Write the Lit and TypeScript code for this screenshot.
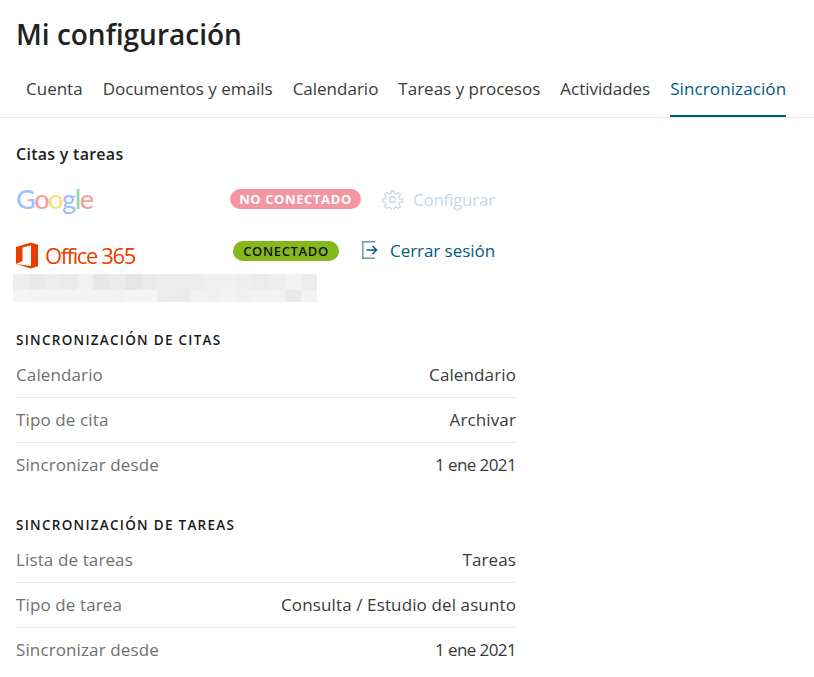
import { LitElement, html, css } from "lit";
import { customElement } from "lit/decorators.js";
import { classMap } from "lit/directives/class-map.js";

const MOSAIC = [
  ["#eeeeec","#e9e9e9","#eeedeb","#e8ebea","#f1f1f1","#e7e7e5","#ebebeb","#e5e5e5","#e9ebeb","#ececec","#ececec","#ededed","#f0f0f0","#f0f0f0","#eeeeee","#ebeded","#eeeeee","#f3f3f3","#ebeded"],
  ["#f5f5f3","#f4f4f4","#f3f3f3","#f3f3f3","#f3f3f3","#f2f2f2","#f2f2f2","#f4f4f4","#f4f4f4","#ececec","#ebebeb","#f1f1f1","#f0f0f0","#f2f2f2","#f2f0ee","#f0f3f2","#f2f2f2","#e8eaea","#f2f2f2"],
];

const tabs = ["Cuenta", "Documentos y emails", "Calendario", "Tareas y procesos", "Actividades", "Sincronización"];

const citas = [["Calendario", "Calendario"], ["Tipo de cita", "Archivar"], ["Sincronizar desde", "1 ene 2021"]];
const tareas = [["Lista de tareas", "Tareas"], ["Tipo de tarea", "Consulta / Estudio del asunto"], ["Sincronizar desde", "1 ene 2021"]];

@customElement("app-root")
export class AppRoot extends LitElement {
  static styles = css`
    :host { display: block; font-family: "Open Sans", "Noto Sans", sans-serif; color: #333; background: #fff; height: 677px; overflow: hidden; }
    h1 { margin: 0; padding: 17px 0 0 16px; font-size: 28px; line-height: 34px; font-weight: 600; color: #222; }
    .tabs { display: flex; gap: 20px; padding: 20px 10px 0 26px; height: 46px; border-bottom: 1px solid #e9e9e9; }
    .tab { font-size: 17px; line-height: 24px; height: 46px; box-sizing: border-box; padding-top: 6px; white-space: nowrap; color: #3a3a3a; }
    .tab.on { color: #005a82; border-bottom: 2px solid #005a82; letter-spacing: 0.1px; }
    .content { width: 500px; padding: 0 0 0 16px; }
    h2 { margin: 0; padding-top: 25px; font-size: 16px; line-height: 22px; font-weight: 600; color: #222; letter-spacing: 0.27px; }
    .svc { display: flex; align-items: center; }
    .g-row { height: 32px; margin-top: 18px; }
    .o-row { height: 30px; margin-top: 21px; }
    .logo { width: 214px; flex: none; white-space: nowrap; }
    .google { font-family: "Lato", sans-serif; font-size: 27px; letter-spacing: -1.4px; line-height: 32px; font-weight: 500; opacity: .5; }
    .g1 { color: #4285f4; } .g2 { color: #ea4335; } .g3 { color: #fbbc05; } .g4 { color: #34a853; }
    .office { display: flex; align-items: center; gap: 5px; padding-top: 8px; color: #eb3c00; font-size: 22px; letter-spacing: -1.4px; }
    .badge { display: inline-flex; align-items: center; justify-content: center; height: 20px; border-radius: 10px; font-size: 13px; font-weight: 700; letter-spacing: 0.6px; }
    .off { width: 131px; background: #f4969f; color: #fff; }
    .on-b { width: 106px; margin-left: 3px; background: #84b81c; color: #111; font-weight: 600; letter-spacing: 0.65px; }
    .act { display: flex; align-items: center; gap: 10px; font-size: 17px; letter-spacing: -0.05px; white-space: nowrap; }
    .cfg { margin-left: 21px; color: #c5d9e8; letter-spacing: -0.25px; }
    .out { margin-left: 22px; color: #005a82; gap: 11px; padding-bottom: 2px; }
    .mosaic { display: grid; grid-template-columns: repeat(19, 16px); grid-template-rows: 16px 12px; margin: 8px 0 0 -3px; width: 304px; }
    h3 { margin: 0; font-size: 13.5px; line-height: 18px; font-weight: 600; letter-spacing: 1.27px; color: #1a1a1a; }
    .sec1, .sec2 { margin-top: 29px; }
    .rows { margin-top: 4px; }
    .row { display: flex; justify-content: space-between; align-items: center; height: 42px; padding-bottom: 2px; border-bottom: 1px solid #e9e9e9; font-size: 17px; letter-spacing: 0.12px; }
    .row:last-child { border-bottom: 0; }
    .k { color: #707070; }
    .v { color: #3a3a3a; }
    .num { letter-spacing: -0.6px; }
  `;

  private rows(data: string[][]) {
    return data.map(([k, v]) => html`<div class="row"><span class="k">${k}</span><span class=${classMap({ v: true, num: /\d/.test(v) })}>${v}</span></div>`);
  }

  render() {
    return html`
      <h1>Mi configuración</h1>
      <div class="tabs">${tabs.map((t, i) => html`<div class=${classMap({ tab: true, on: i === 5 })}>${t}</div>`)}</div>
      <div class="content">
        <h2>Citas y tareas</h2>
        <div class="svc g-row">
          <div class="logo google"><span class="g1">G</span><span class="g2">o</span><span class="g3">o</span><span class="g1">g</span><span class="g4">l</span><span class="g2">e</span></div>
          <span class="badge off">NO CONECTADO</span>
          <span class="act cfg">
            <svg width="21" height="21" viewBox="0 0 24 24" fill="none" stroke="#c5d9e8" stroke-width="1.5" stroke-linejoin="round">
              <circle cx="12" cy="12" r="3.4"></circle>
              <path d="M10.3 2h3.4l.5 3 2 .85 2.5-1.75 2.4 2.4-1.75 2.5.85 2 3 .5v3.4l-3 .5-.85 2 1.75 2.5-2.4 2.4-2.5-1.75-2 .85-.5 3h-3.4l-.5-3-2-.85-2.5 1.75-2.4-2.4 1.75-2.5-.85-2-3-.5v-3.4l3-.5.85-2L3.2 6.5l2.4-2.4 2.5 1.75 2-.85z"></path>
            </svg>
            Configurar
          </span>
        </div>
        <div class="svc o-row">
          <div class="logo office">
            <svg width="24" height="27" viewBox="0 0 24 27"><path fill="#eb3c00" fill-rule="evenodd" d="M0 5 15 .5l7 2.200v21.600L15 26.500 0 22zM15 3.500 6.500 5.500v13.500L0 22l15 2z"></path></svg>
            <span>Office 365</span>
          </div>
          <span class="badge on-b">CONECTADO</span>
          <span class="act out">
            <svg width="18" height="18" viewBox="0 0 18 18" fill="none" stroke-width="1.5">
              <path stroke="#6f96ad" d="M14 .8H1.800v16.400H14"></path>
              <path stroke="#005a82" d="M5.500 9h10M11.500 5l4 4-4 4"></path>
            </svg>
            Cerrar sesión
          </span>
        </div>
        <div class="mosaic">${MOSAIC.flat().map((c) => html`<i style="background:${c}"></i>`)}</div>
        <h3 class="sec1">SINCRONIZACIÓN DE CITAS</h3>
        <div class="rows">${this.rows(citas)}</div>
        <h3 class="sec2">SINCRONIZACIÓN DE TAREAS</h3>
        <div class="rows">${this.rows(tareas)}</div>
      </div>
    `;
  }
}
